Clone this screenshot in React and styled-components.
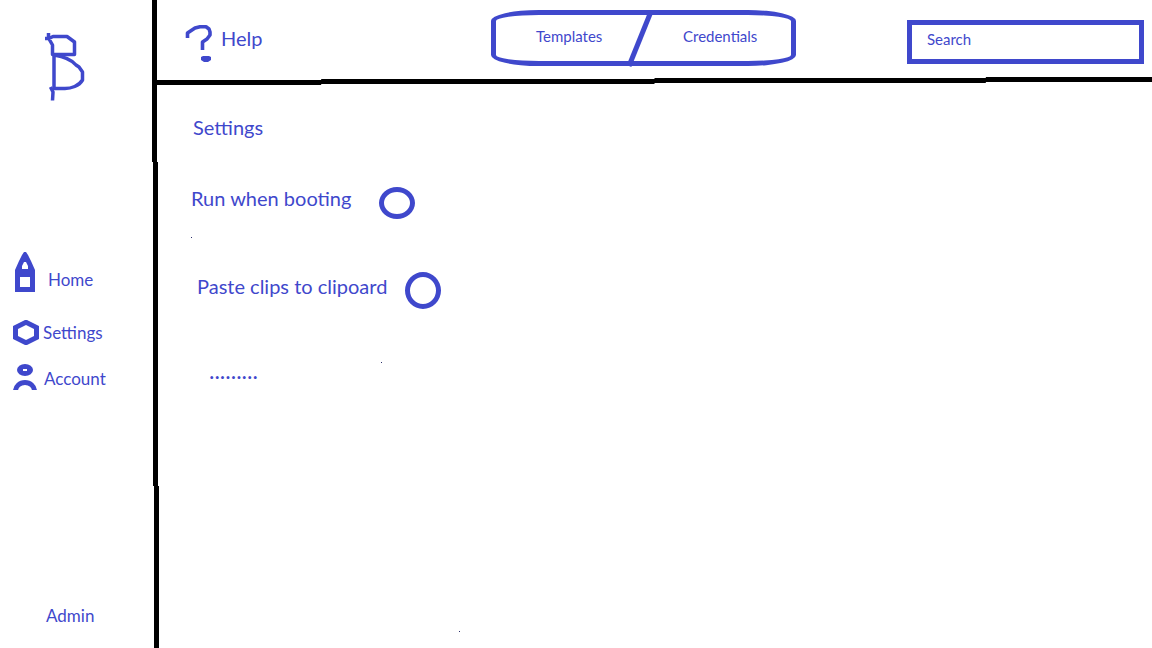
import React from "react";
import styled, { createGlobalStyle } from "styled-components";

const ink = "#3f48cc";

const GlobalStyle = createGlobalStyle`
  *, *::before, *::after { box-sizing: border-box; }
  body {
    margin: 0;
    background: #fff;
    color: ${ink};
    font-family: Lato, "Liberation Sans", sans-serif;
    font-size: 20px;
    line-height: 24px;
  }
  button, input { font: inherit; color: inherit; }
  svg { display: block; flex: none; }
`;

const Page = styled.div`
  display: flex;
  min-height: 100vh;
`;

const Sidebar = styled.aside`
  flex: none;
  width: 152px;
  display: flex;
  flex-direction: column;
  padding: 30px 0 20px;
`;

const LogoLink = styled.a`
  align-self: flex-start;
  margin-left: 44px;
`;

const Nav = styled.nav`
  display: flex;
  flex-direction: column;
  margin-top: 150px;
  padding-left: 12px;
`;

const NavLink = styled.a`
  display: flex;
  align-items: center;
  gap: ${(p) => p.$gap}px;
  margin-bottom: ${(p) => p.$after || 0}px;
  color: inherit;
  font-size: 17px;
  text-decoration: none;

  span { padding-top: ${(p) => p.$drop || 0}px; }
`;

const AdminLink = styled.a`
  margin: auto 0 0 46px;
  color: inherit;
  font-size: 17px;
  text-decoration: none;
`;

/* Hand-ruled lines: each one shifts by a pixel part of the way along. */
const SideRule = styled.div`
  flex: none;
  width: 7px;
  background: #000;
  clip-path: polygon(
    0 0, 5px 0, 5px 25%, 6px 25%, 6px 75%, 7px 75%, 7px 100%,
    2px 100%, 2px 75%, 1px 75%, 1px 25%, 0 25%
  );
`;

const TopRule = styled.div`
  height: 8px;
  margin-left: -2px;
  background: #000;
  clip-path: polygon(
    0 3px, 16.5% 3px, 16.5% 2px, 50% 2px, 50% 1px, 83.3% 1px, 83.3% 0, 100% 0,
    100% 5px, 83.3% 5px, 83.3% 6px, 50% 6px, 50% 7px, 16.5% 7px, 16.5% 8px, 0 8px
  );
`;

const Content = styled.div`
  flex: 1;
  min-width: 0;
  display: flex;
  flex-direction: column;
`;

const Header = styled.header`
  display: flex;
  align-items: flex-start;
  padding: 10px 8px 11px 26px;
`;

const HelpLink = styled.a`
  flex: 0 1 306px;
  display: flex;
  gap: 8px;
  padding-top: 14px;
  color: inherit;
  text-decoration: none;

  span { padding-top: 2px; }
`;

const Switcher = styled.div`
  flex: none;
  display: flex;
  width: 305px;
  height: 56px;
  border: 5px solid ${ink};
  border-radius: 48px / 11px;
`;

const SwitchButton = styled.button`
  flex: ${(p) => p.$grow};
  padding: 0 0 4px ${(p) => p.$inset}px;
  border: 0;
  background: none;
  font-size: 15px;
  text-align: left;
  cursor: pointer;
`;

const Slash = styled.svg`
  overflow: visible;
`;

const SearchInput = styled.input`
  flex: 0 1 237px;
  min-width: 0;
  height: 44px;
  margin: 10px 0 0 auto;
  padding: 0 15px 6px;
  border: 5px solid ${ink};
  border-radius: 0;
  background: #fff;
  font-size: 15px;

  &::placeholder { color: ${ink}; opacity: 1; }
`;

const speck = "linear-gradient(#2b2f6b, #2b2f6b)";

const Main = styled.main`
  flex: 1;
  display: flex;
  flex-direction: column;
  align-items: flex-start;
  padding: 30px 32px 0;
  background: ${speck} 32px 152px / 1px 1px no-repeat,
    ${speck} 222px 277px / 1px 1px no-repeat,
    ${speck} 300px 546px / 1px 1px no-repeat;
`;

const Title = styled.h1`
  margin: 0 0 48px 2px;
  font-size: 20px;
  font-weight: 400;
`;

const Option = styled.label`
  display: flex;
  align-items: center;
  gap: ${(p) => p.$gap}px;
  margin: 0 0 ${(p) => p.$after}px ${(p) => p.$indent || 0}px;

  span { margin-top: -10px; }
`;

const Toggle = styled.input`
  appearance: none;
  flex: none;
  width: 36px;
  height: ${(p) => p.$height}px;
  margin: 0;
  border: 5px solid ${ink};
  border-radius: 50%;
  background: #fff;
  cursor: pointer;

  &:checked { background: ${ink}; }
`;

const More = styled.p`
  margin: 0 0 0 18px;
  font-size: 23px;
`;

function Logo() {
  return (
    <svg width="42" height="72" viewBox="44 30 42 72" fill="none" stroke={ink} strokeWidth="3.5" strokeLinejoin="round" aria-hidden="true">
      <path d="M48.5 33V38L52.5 45V54.5H74.500V42L67 36.5H53L49 38.5H45" />
      <path d="M54 55V90M54 55C66 57 72 60 76 65L79 67L82.500 72V80C79 86 71 88.500 65 88.500H54" />
      <path d="M50.500 87L53 92L52.500 100.500" />
    </svg>
  );
}

function HomeIcon() {
  return (
    <svg width="26" height="40" viewBox="12 252 26 40" aria-hidden="true">
      <path fill={ink} fillRule="evenodd" d="M24 252H26L28 255L31 261L35 270V292H15V270L19 261L22 255ZM24 262L22 266V269H28V266L26 262ZM20 277V287H30V277Z" />
    </svg>
  );
}

function HexIcon() {
  return (
    <svg width="28" height="26" viewBox="12 320 28 26" aria-hidden="true">
      <path fill={ink} fillRule="evenodd" d="M25 320H27L39 326V339L27 345H25L13 339V326ZM26 325L18 329V336L26 340L34 336V329Z" />
    </svg>
  );
}

function PersonIcon() {
  return (
    <svg width="26" height="26" viewBox="12 363 26 26" aria-hidden="true">
      <ellipse cx="25" cy="369" rx="8" ry="6" fill={ink} />
      <path fill="#fff" d="M23 368H27V370H23Z" />
      <path fill="none" stroke={ink} strokeWidth="5" d="M15.500 390A9.500 8.500 0 0 1 34.500 390" />
    </svg>
  );
}

function HelpIcon() {
  return (
    <svg width="28" height="40" viewBox="185 24 28 40" aria-hidden="true">
      <path fill="none" stroke={ink} strokeWidth="3.6" strokeLinejoin="round" d="M187.500 38V33L195 28L200 26.800H206L209 29L210 32V35L207 39L202.500 42V50" />
      <path fill={ink} d="M203 56H209L211 57V60L208 62H204L201 60V57Z" />
    </svg>
  );
}

export default function App() {
  return (
    <>
      <GlobalStyle />
      <Page>
        <Sidebar>
          <LogoLink href="#" aria-label="B">
            <Logo />
          </LogoLink>
          <Nav>
            <NavLink href="#home" $gap={10} $drop={16} $after={28}>
              <HomeIcon />
              <span>Home</span>
            </NavLink>
            <NavLink href="#settings" $gap={3} $after={17}>
              <HexIcon />
              <span>Settings</span>
            </NavLink>
            <NavLink href="#account" $gap={6} $drop={4}>
              <PersonIcon />
              <span>Account</span>
            </NavLink>
          </Nav>
          <AdminLink href="#admin">Admin</AdminLink>
        </Sidebar>
        <SideRule />
        <Content>
          <Header>
            <HelpLink href="#help">
              <HelpIcon />
              <span>Help</span>
            </HelpLink>
            <Switcher>
              <SwitchButton type="button" $grow="0 0 132px" $inset={40}>Templates</SwitchButton>
              <Slash width="22" height="46" viewBox="0 0 22 46" aria-hidden="true">
                <path d="M22 -1L1 51" fill="none" stroke={ink} strokeWidth="5" />
              </Slash>
              <SwitchButton type="button" $grow="1" $inset={33}>Credentials</SwitchButton>
            </Switcher>
            <SearchInput type="search" placeholder="Search" aria-label="Search" />
          </Header>
          <TopRule />
          <Main>
            <Title>Settings</Title>
            <Option $gap={28} $after={53}>
              <span>Run when booting</span>
              <Toggle type="checkbox" $height={32} />
            </Option>
            <Option $gap={18} $after={49} $indent={6}>
              <span>Paste clips to clipoard</span>
              <Toggle type="checkbox" $height={37} />
            </Option>
            <More>.........</More>
          </Main>
        </Content>
      </Page>
    </>
  );
}
